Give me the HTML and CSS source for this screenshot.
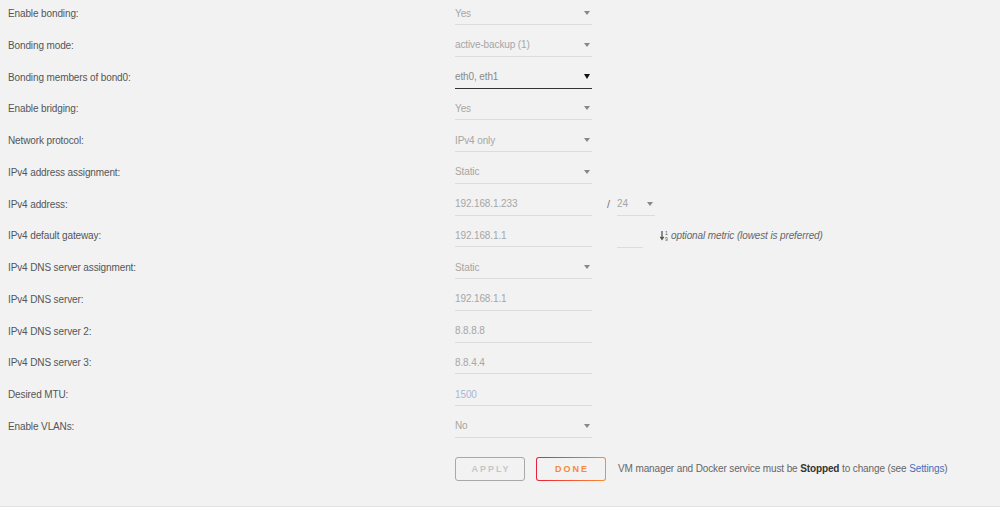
FILE: index.html
```
<!DOCTYPE html>
<html>
    <head>
        <title>Network Settings</title>
        <meta charset="UTF-8">
        <meta name="viewport" content="width=device-width, initial-scale=1.0">
        <link rel="stylesheet" href="styles.css">
    </head>
    <body>
        <div class="main">
            <div class="row">
                <span class="label">Enable bonding:</span>
                <div class="field off"><span>Yes</span><i class="caret"></i></div>
            </div>
            <div class="row">
                <span class="label">Bonding mode:</span>
                <div class="field off"><span>active-backup (1)</span><i class="caret"></i></div>
            </div>
            <div class="row">
                <span class="label">Bonding members of bond0:</span>
                <div class="field on"><span>eth0, eth1</span><i class="caret"></i></div>
            </div>
            <div class="row">
                <span class="label">Enable bridging:</span>
                <div class="field off"><span>Yes</span><i class="caret"></i></div>
            </div>
            <div class="row">
                <span class="label">Network protocol:</span>
                <div class="field off"><span>IPv4 only</span><i class="caret"></i></div>
            </div>
            <div class="row">
                <span class="label">IPv4 address assignment:</span>
                <div class="field off"><span>Static</span><i class="caret"></i></div>
            </div>
            <div class="row">
                <span class="label">IPv4 address:</span>
                <div class="field off"><span>192.168.1.233</span></div>
                <span class="slash">/</span>
                <div class="field off mask"><span>24</span><i class="caret"></i></div>
            </div>
            <div class="row">
                <span class="label">IPv4 default gateway:</span>
                <div class="field off"><span>192.168.1.1</span></div>
                <div class="field off metric"></div>
                <span class="hint">
                    <svg class="sort" width="9" height="11" viewBox="0 0 9 11">
                        <path d="M2 1v7.5M0.3 6.8L2 9.3 3.7 6.8" stroke="#555" stroke-width="1.3" fill="none"/>
                        <text x="5" y="5" font-size="5" font-family="Liberation Sans" fill="#555">1</text>
                        <text x="5" y="10.5" font-size="5" font-family="Liberation Sans" fill="#555">9</text>
                    </svg>
                    <em>optional metric (lowest is preferred)</em>
                </span>
            </div>
            <div class="row">
                <span class="label">IPv4 DNS server assignment:</span>
                <div class="field off"><span>Static</span><i class="caret"></i></div>
            </div>
            <div class="row">
                <span class="label">IPv4 DNS server:</span>
                <div class="field off"><span>192.168.1.1</span></div>
            </div>
            <div class="row">
                <span class="label">IPv4 DNS server 2:</span>
                <div class="field off"><span>8.8.8.8</span></div>
            </div>
            <div class="row">
                <span class="label">IPv4 DNS server 3:</span>
                <div class="field off"><span>8.8.4.4</span></div>
            </div>
            <div class="row">
                <span class="label">Desired MTU:</span>
                <div class="field off"><span class="placeholder">1500</span></div>
            </div>
            <div class="row">
                <span class="label">Enable VLANs:</span>
                <div class="field off"><span>No</span><i class="caret"></i></div>
            </div>
            <div class="buttons">
                <button class="btn apply">APPLY</button>
                <button class="btn done">DONE</button>
                <span class="note">VM manager and Docker service must be <b>Stopped</b> to change (see <a href="#">Settings</a>)</span>
            </div>
        </div>
    </body>
</html>
```
FILE: styles.css
```
body
{
    margin: 0;
    background-color: #f2f2f2;
    font-family: "Liberation Sans", Arial, sans-serif;
    font-size: 10px;
    letter-spacing: -0.12px;
    color: #555;
}
div.main
{
    padding: 0 0 25px 0;
    border-bottom: 1px solid #e2e2e2;
}
.row
{
    display: flex;
    align-items: flex-start;
    height: 31.77px;
}
.label
{
    width: 447px;
    padding-left: 8px;
    line-height: 27px;
    flex: none;
}
.field
{
    display: flex;
    align-items: center;
    justify-content: space-between;
    width: 137px;
    height: 25px;
    border-bottom: 1px solid #dcdcdc;
    padding-top: 2px;
    box-sizing: border-box;
    flex: none;
}
.field.off
{
    color: #a6a6a6;
}
.field.on
{
    color: #8a8a8a;
    border-bottom-color: #333;
}
.caret
{
    width: 0;
    height: 0;
    margin-right: 2px;
    border-left: 3px solid transparent;
    border-right: 3px solid transparent;
    border-top: 4px solid #888;
}
.field.on .caret
{
    border-left-width: 3.5px;
    border-right-width: 3.5px;
    border-top: 5px solid #111;
}
.placeholder
{
    color: #a8b8d4;
}
.slash
{
    width: 25px;
    flex: none;
    padding-left: 15px;
    box-sizing: border-box;
    line-height: 27px;
    color: #777;
    font-size: 11px;
}
.field.mask
{
    width: 38px;
}
.field.metric
{
    width: 26px;
    margin-left: 25px;
    height: 26px;
}
.hint
{
    display: flex;
    align-items: center;
    height: 27px;
    margin-left: 17px;
    color: #666;
}
.sort
{
    margin-right: 2px;
}
.buttons
{
    display: flex;
    align-items: center;
    margin-top: 12px;
    padding-left: 455px;
}
.btn
{
    width: 70px;
    height: 24px;
    border-radius: 3px;
    font-family: "Liberation Sans", Arial, sans-serif;
    font-size: 9px;
    font-weight: bold;
    letter-spacing: 2px;
    padding: 0 0 0 2px;
    background-color: #f2f2f2;
}
.apply
{
    border: 1.5px solid #a8a8a8;
    color: #c6c6c6;
}
.done
{
    margin-left: 11px;
    border: 1.5px solid transparent;
    background: linear-gradient(#f2f2f2, #f2f2f2) padding-box, linear-gradient(90deg, #e8203a, #ff8c2f) border-box;
    color: #f58a3a;
}
.note
{
    margin-left: 12px;
    color: #666;
}
.note b
{
    color: #333;
}
.note a
{
    color: #486dba;
    text-decoration: none;
}
```
